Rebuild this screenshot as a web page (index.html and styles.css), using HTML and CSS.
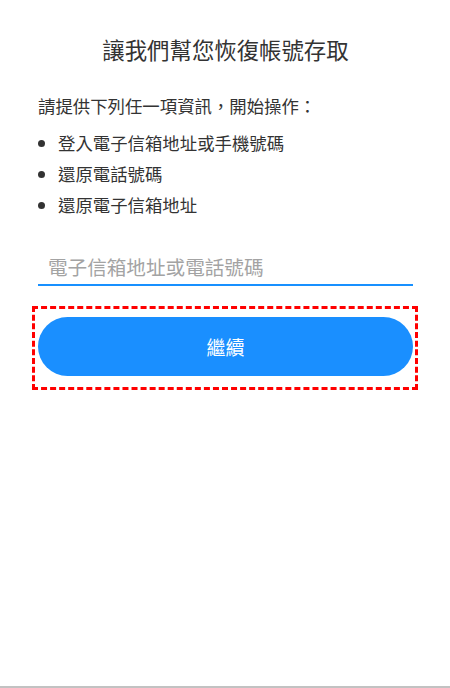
FILE: index.html
```html
<!DOCTYPE html>
<html lang="zh-Hant">
<head>
<meta charset="utf-8">
<title>帳號存取</title>
<link rel="stylesheet" href="styles.css">
</head>
<body>
<div class="page">
  <h1 class="title">讓我們幫您恢復帳號存取</h1>
  <p class="intro">請提供下列任一項資訊，開始操作：</p>
  <ul class="options">
    <li>登入電子信箱地址或手機號碼</li>
    <li>還原電話號碼</li>
    <li>還原電子信箱地址</li>
  </ul>
  <input class="field" type="text" placeholder="電子信箱地址或電話號碼">
  <div class="highlight">
    <button class="btn" type="button">繼續</button>
  </div>
</div>
</body>
</html>
```
FILE: styles.css
```css
html, body {
  margin: 0;
  padding: 0;
  background: #fff;
}
body {
  font-family: "Noto Sans CJK TC", "Noto Sans", sans-serif;
  color: #333;
}
.page {
  box-sizing: border-box;
  height: 688px;
  padding: 34px 37px 0 38px;
  border-bottom: 2px solid #c2c2c2;
  display: flex;
  flex-direction: column;
}
.title {
  margin: 0;
  font-size: 22.4px;
  font-weight: 400;
  line-height: 31px;
  text-align: center;
  color: #333;
}
.intro {
  margin: 25px 0 0;
  font-size: 17.4px;
  line-height: 31px;
}
.options {
  margin: 6px 0 0;
  padding: 0 0 0 20px;
  font-size: 17.4px;
  line-height: 31px;
}
.field {
  margin: 28px 0 0;
  box-sizing: border-box;
  height: 38px;
  width: 100%;
  padding: 0 10px;
  border: 0;
  border-bottom: 2px solid #1890ff;
  outline: none;
  font-family: inherit;
  font-size: 19.6px;
  color: #333;
  background: transparent;
}
.field::placeholder {
  color: #a3a3a3;
}
.highlight {
  margin: 20px -5px 0 -6px;
  padding: 8px 2px 11px 3px;
  border: 3px dashed #ff0000;
}
.btn {
  display: block;
  width: 100%;
  height: 59px;
  border: 0;
  border-radius: 30px;
  background: #1a8fff;
  color: #fff;
  font-family: inherit;
  font-size: 19px;
  cursor: pointer;
}
```
